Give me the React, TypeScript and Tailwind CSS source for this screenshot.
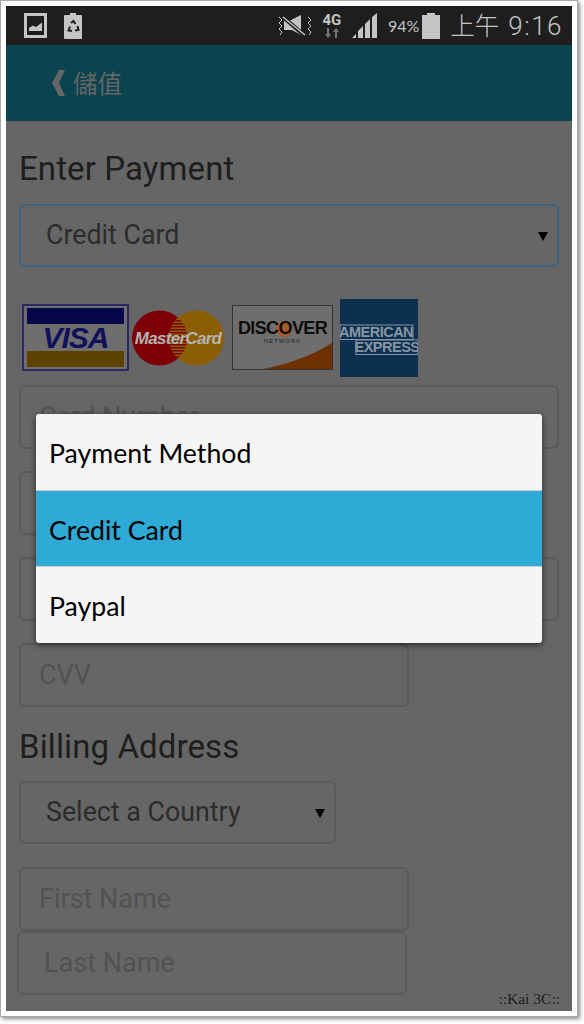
import { ReactNode } from 'react';

const roboto = "font-['Roboto',sans-serif]";

function StatusBar() {
  return (
    <div className="flex h-[39px] shrink-0 items-center bg-[#1e1e1e] pl-[18px] pr-[9px] text-[#c4c4c4]">
      <svg width="23" height="25" viewBox="0 0 23 25" className="mr-[17px]">
        <rect x="1.5" y="1.5" width="20" height="22" fill="none" stroke="#c4c4c4" strokeWidth="3" />
        <path d="M5 18 L5 15 L9 12.5 L12 14 L18 9.5 L18 18 Z" fill="#c4c4c4" />
      </svg>
      <svg width="18" height="26" viewBox="0 0 18 26">
        <path d="M6 0 H12 V2 H17 Q18 2 18 3 V25 Q18 26 17 26 H1 Q0 26 0 25 V3 Q0 2 1 2 H6 Z" fill="#c4c4c4" />
        <path d="M7 10 L9.5 8 L11.5 11 M13.5 13 L14.5 17 L11 17.5 M8 18 L4.5 17.5 L6 13.5" fill="none" stroke="#1e1e1e" strokeWidth="2" />
      </svg>
      <div className="flex-1" />
      <svg width="36" height="24" viewBox="0 0 36 24" className="mr-[8px]">
        <path d="M2 3 L5 6 L2 9 L5 12 L2 15 L5 18 L3 21" fill="none" stroke="#c4c4c4" strokeWidth="1" />
        <path d="M31 3 L34 6 L31 9 L34 12 L31 15 L34 18 L32 21" fill="none" stroke="#c4c4c4" strokeWidth="1" />
        <path d="M7 7 L12 7 L24 1 L24 21 L15 16 L7 16 Z" fill="#c4c4c4" />
        <path d="M5 2 L28 22" stroke="#1e1e1e" strokeWidth="4" />
        <path d="M6 3 L28 21" stroke="#c4c4c4" strokeWidth="1.5" />
      </svg>
      <div className="mr-[9px] flex w-[22px] flex-col items-center">
        <span className={`${roboto} text-[15px] font-bold leading-[15px]`}>4G</span>
        <svg width="16" height="10" viewBox="0 0 16 10">
          <path d="M3 0 H5 V6 H7 L4 10 L1 6 H3 Z" fill="#777" />
          <path d="M12 0 L15 4 H13 V10 H11 V4 H9 Z" fill="#777" />
        </svg>
      </div>
      <svg width="26" height="25" viewBox="0 0 26 25" className="mr-[10px]">
        <path d="M0 25 L4 21 V25 Z M6 25 V18 L11 13 V25 Z M13 25 V11 L18 6 V25 Z M20 25 V4 L25 0 V25 Z" fill="#c4c4c4" />
      </svg>
      <span className="mr-[3px] font-['Lato',sans-serif] text-[16px]">94%</span>
      <svg width="18" height="26" viewBox="0 0 18 26" className="mr-[10px]">
        <path d="M5 0 H13 V2 H18 V26 H0 V2 H5 Z" fill="#c4c4c4" />
      </svg>
      <span className="font-['Noto_Sans_CJK_TC',sans-serif] text-[24.5px] font-light leading-none">上午</span>
      <span className={`${roboto} ml-[9px] text-[26px] font-light leading-none tracking-[1.5px]`}>9:16</span>
    </div>
  );
}

function Field({ label, className }: { label: string; className: string }) {
  return (
    <div
      className={`flex h-[64px] items-center rounded-[6px] border-2 border-[#5a5a5a] pl-[18px] pt-[1px] text-[27px] text-[#525252] ${className}`}
    >
      {label}
    </div>
  );
}

function SelectBox({ label, className }: { label: string; className: string }) {
  return (
    <div
      className={`flex h-[63px] items-center justify-between rounded-[6px] border-2 pl-[25px] pr-[9px] text-[26.8px] text-[#2c2c2c] ${className}`}
    >
      <span>{label}</span>
      <svg width="10" height="10" viewBox="0 0 10 10">
        <path d="M0 1 H10 L5 10 Z" fill="#000" />
      </svg>
    </div>
  );
}

function Visa() {
  return (
    <div className="flex h-[67px] w-[107px] flex-col justify-between border-2 border-[#2b2b62] bg-[#6e6e6e] px-[3px] py-[2px]">
      <div className="h-[16px] bg-[#06064a]" />
      <div className="text-center font-['Liberation_Sans',sans-serif] text-[30px] font-bold italic leading-[26px] tracking-[-1px] text-[#10105c]">
        VISA
      </div>
      <div className="h-[16px] bg-[#5e4200]" />
    </div>
  );
}

function MasterCard() {
  const stripes = [10, 13, 16, 19, 22, 25, 28, 31, 34, 37, 40, 43, 46];
  return (
    <svg width="92" height="56" viewBox="0 0 92 56">
      <defs>
        <clipPath id="mc-lens">
          <path d="M46 7.5 A27.5 27.5 0 0 1 46 48.5 A27.5 27.5 0 0 1 46 7.5 Z" />
        </clipPath>
      </defs>
      <circle cx="27.5" cy="28" r="27.5" fill="#7e0006" />
      <circle cx="64.5" cy="28" r="27.5" fill="#8c5e04" />
      <g clipPath="url(#mc-lens)">
        <rect x="30" y="0" width="32" height="56" fill="#8c5e04" />
        {stripes.map((y) => (
          <rect key={y} x="30" y={y} width="32" height="1.5" fill="#7e0006" />
        ))}
      </g>
      <text
        x="46"
        y="34"
        textAnchor="middle"
        fontFamily="Liberation Sans, sans-serif"
        fontSize="17"
        fontWeight="700"
        fontStyle="italic"
        letterSpacing="-0.7"
        fill="#b4b4b4"
      >
        MasterCard
      </text>
    </svg>
  );
}

function Discover() {
  return (
    <div className="relative h-[65px] w-[101px] overflow-hidden border border-[#333] bg-[#6e6e6e]">
      <svg width="101" height="65" viewBox="0 0 101 65" className="absolute left-0 top-0">
        <path d="M24 64 Q70 56 100 36 V64 Z" fill="#6e3000" />
        <circle cx="51" cy="23" r="8" fill="#a85c28" />
      </svg>
      <div className="relative mt-[13px] text-center font-['Liberation_Sans',sans-serif] text-[18px] font-bold leading-[18px] tracking-[-0.6px] text-[#0c0c0c]">
        DISCOVER
      </div>
      <div className="relative text-center font-['Liberation_Sans',sans-serif] text-[6px] leading-[9px] tracking-[1px] text-[#222]">
        NETWORK
      </div>
    </div>
  );
}

function Amex() {
  return (
    <svg width="78" height="78" viewBox="0 0 78 78">
      <rect width="78" height="78" fill="#0e3050" />
      <rect x="0" y="26" width="73" height="14.5" fill="#0e3050" stroke="#8796a4" strokeWidth="1" />
      <rect x="16" y="41" width="62" height="14.5" fill="#0e3050" stroke="#8796a4" strokeWidth="1" />
      <text x="36" y="38" textAnchor="middle" fontFamily="Liberation Sans, sans-serif" fontSize="14.5" fontWeight="700" letterSpacing="-0.5" fill="#8796a4">
        AMERICAN
      </text>
      <text x="47" y="53" textAnchor="middle" fontFamily="Liberation Sans, sans-serif" fontSize="14.5" fontWeight="700" letterSpacing="-0.5" fill="#8796a4">
        EXPRESS
      </text>
    </svg>
  );
}

function Option({ children, active }: { children: ReactNode; active?: boolean }) {
  return (
    <div
      className={`flex h-[76px] items-center border-t border-[#cfcfcf] pl-[13px] pt-[3px] font-['Lato',sans-serif] text-[26.7px] text-black first:border-t-0 ${
        active ? 'bg-[#2fa9d6]' : ''
      }`}
    >
      {children}
    </div>
  );
}

export default function App() {
  return (
    <div className="h-[1024px] w-[584px] overflow-hidden bg-white">
      <div className="h-[1017px] w-[578px] border border-[#aaa] bg-white p-[5px] shadow-[2px_2px_4px_rgba(0,0,0,0.45)]">
        <div className={`relative flex h-full flex-col overflow-hidden bg-[#666] ${roboto}`}>
          <StatusBar />
          <div className="flex h-[76px] shrink-0 items-center bg-[#0a444e] pl-[46px] font-['Noto_Sans_CJK_TC',sans-serif] text-[24.5px] text-[#666]">
            <svg width="13" height="26" viewBox="0 0 13 26" className="mr-[8px]">
              <path d="M7 0 H13 L7 13 L13 26 H7 L0 13 Z" fill="#666" />
            </svg>
            儲值
          </div>

          <div className="flex flex-col pl-[13px] pt-[28px]">
            <h1 className="text-[33px] font-normal leading-[40px] tracking-[0.1px] text-[#1e1e1e]">Enter Payment</h1>
            <SelectBox label="Credit Card" className="mt-[15px] w-[540px] border-[#3a6485]" />

            <div className="mt-[31px] flex h-[79px] items-center pl-[3px]">
              <Visa />
              <div className="ml-[3px]"><MasterCard /></div>
              <div className="ml-[8px]"><Discover /></div>
              <div className="ml-[7px]"><Amex /></div>
            </div>

            <Field label="Card Number" className="mt-[8px] w-[540px]" />
            <Field label="" className="mt-[22px] w-[390px]" />
            <Field label="" className="mt-[22px] w-[540px]" />
            <Field label="CVV" className="mt-[22px] w-[390px]" />

            <h2 className="mt-[20px] text-[33px] font-normal leading-[40px] tracking-[0.1px] text-[#1e1e1e]">Billing Address</h2>
            <SelectBox label="Select a Country" className="mt-[14px] w-[317px] border-[#5a5a5a]" />
            <Field label="First Name" className="mt-[23px] w-[390px]" />
            <Field label="Last Name" className="ml-[-2px] mt-[0px] w-[390px] pl-[25px]" />
          </div>

          <div className="absolute left-[30px] right-[30px] top-[408px] overflow-hidden rounded-[3px] bg-[#f5f5f5] pb-[1px] shadow-[0_2px_6px_rgba(0,0,0,0.6)]">
            <Option>Payment Method</Option>
            <Option active>Credit Card</Option>
            <Option>Paypal</Option>
          </div>

          <span className="absolute bottom-[5px] right-[12px] font-['Liberation_Serif',serif] text-[15.5px] leading-none text-[#1c1c1c]">
            ::Kai 3C::
          </span>
        </div>
      </div>
    </div>
  );
}
